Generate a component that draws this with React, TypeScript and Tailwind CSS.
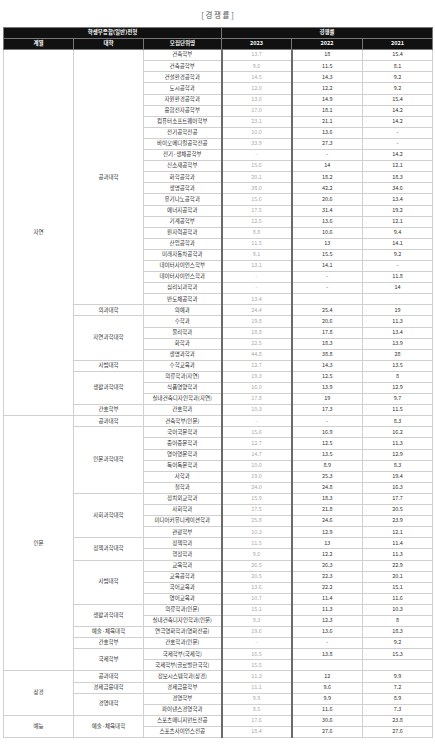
import React from 'react';

type Dept = [string, string, string, string];
type College = { name: string; depts: Dept[] };
type Group = { name: string; colleges: College[] };

const groups: Group[] = [
  {
    name: '자연',
    colleges: [
      {
        name: '공과대학',
        depts: [
          ['건축학부', '13.7', '18', '15.4'],
          ['건축공학부', '9.6', '11.5', '8.1'],
          ['건설환경공학과', '14.5', '14.3', '9.2'],
          ['도시공학과', '12.0', '12.2', '9.2'],
          ['자원환경공학과', '13.0', '14.9', '15.4'],
          ['융합전자공학부', '17.0', '18.1', '14.2'],
          ['컴퓨터소프트웨어학부', '23.1', '21.1', '14.2'],
          ['전기공학전공', '10.0', '13.6', '-'],
          ['바이오메디컬공학전공', '33.9', '27.3', '-'],
          ['전기·생체공학부', '-', '-', '14.2'],
          ['신소재공학부', '15.6', '14', '12.1'],
          ['화학공학과', '20.1', '18.2', '18.3'],
          ['생명공학과', '38.0', '42.2', '34.6'],
          ['유기나노공학과', '15.6', '20.6', '13.4'],
          ['에너지공학과', '17.5', '31.4', '19.2'],
          ['기계공학부', '12.5', '13.6', '12.1'],
          ['원자력공학과', '8.8', '10.6', '9.4'],
          ['산업공학과', '11.5', '13', '14.1'],
          ['미래자동차공학과', '9.1', '15.5', '9.2'],
          ['데이터사이언스학부', '13.1', '14.1', '-'],
          ['데이터사이언스학과', '-', '-', '11.8'],
          ['심리뇌과학과', '-', '-', '14'],
          ['반도체공학과', '13.4', '', ''],
        ],
      },
      { name: '의과대학', depts: [['의예과', '24.4', '25.4', '19']] },
      {
        name: '자연과학대학',
        depts: [
          ['수학과', '19.8', '20.6', '11.3'],
          ['물리학과', '18.8', '17.8', '13.4'],
          ['화학과', '22.5', '18.3', '13.9'],
          ['생명과학과', '44.8', '38.8', '28'],
        ],
      },
      { name: '사범대학', depts: [['수학교육과', '12.7', '14.3', '13.5']] },
      {
        name: '생활과학대학',
        depts: [
          ['의류학과(자연)', '19.3', '12.5', '8'],
          ['식품영양학과', '16.0', '13.9', '12.9'],
          ['실내건축디자인학과(자연)', '17.8', '19', '9.7'],
        ],
      },
      { name: '간호학부', depts: [['간호학과', '10.3', '17.3', '11.5']] },
    ],
  },
  {
    name: '인문',
    colleges: [
      { name: '공과대학', depts: [['건축학부(인문)', '-', '-', '8.3']] },
      {
        name: '인문과학대학',
        depts: [
          ['국어국문학과', '15.6', '16.9', '16.2'],
          ['중어중문학과', '12.7', '12.5', '11.3'],
          ['영어영문학과', '14.7', '13.5', '12.9'],
          ['독어독문학과', '10.0', '8.9', '8.3'],
          ['사학과', '19.0', '25.3', '19.4'],
          ['철학과', '24.0', '24.8', '16.3'],
        ],
      },
      {
        name: '사회과학대학',
        depts: [
          ['정치외교학과', '15.9', '18.3', '17.7'],
          ['사회학과', '17.5', '21.8', '20.5'],
          ['미디어커뮤니케이션학과', '25.8', '24.6', '23.9'],
          ['관광학부', '10.3', '12.9', '12.1'],
        ],
      },
      {
        name: '정책과학대학',
        depts: [
          ['정책학과', '11.5', '13', '11.4'],
          ['행정학과', '9.6', '12.2', '11.3'],
        ],
      },
      {
        name: '사범대학',
        depts: [
          ['교육학과', '26.5', '26.3', '22.9'],
          ['교육공학과', '20.5', '22.3', '20.1'],
          ['국어교육과', '13.6', '22.2', '15.1'],
          ['영어교육과', '10.7', '11.4', '11.6'],
        ],
      },
      {
        name: '생활과학대학',
        depts: [
          ['의류학과(인문)', '15.1', '11.3', '10.3'],
          ['실내건축디자인학과(인문)', '9.3', '12.3', '8'],
        ],
      },
      { name: '예술·체육대학', depts: [['연극영화학과(영화전공)', '19.6', '13.6', '18.3']] },
      { name: '간호학부', depts: [['간호학과(인문)', '-', '-', '9.2']] },
      {
        name: '국제학부',
        depts: [
          ['국제학부(국제학)', '16.5', '13.8', '15.3'],
          ['국제학부(글로벌한국학)', '15.5', '', ''],
        ],
      },
    ],
  },
  {
    name: '상경',
    colleges: [
      { name: '공과대학', depts: [['정보시스템학과(상경)', '11.3', '12', '9.9']] },
      { name: '경제금융대학', depts: [['경제금융학부', '11.1', '9.6', '7.2']] },
      {
        name: '경영대학',
        depts: [
          ['경영학부', '9.9', '9.9', '8.9'],
          ['파이낸스경영학과', '8.5', '11.6', '7.3'],
        ],
      },
    ],
  },
  {
    name: '예능',
    colleges: [
      {
        name: '예술·체육대학',
        depts: [
          ['스포츠매니지먼트전공', '17.6', '30.6', '23.8'],
          ['스포츠사이언스전공', '18.4', '27.6', '27.6'],
        ],
      },
    ],
  },
];

const cell = 'border border-[#d0d0d0] h-[11.1px] p-0 text-center align-middle leading-none text-[5.5px] text-[#333]';
const head = 'border border-[#777] h-[11.1px] p-0 text-center align-middle leading-none text-[5.5px] font-bold text-white bg-[#111]';
const thick = 'border-x-2 border-x-[#6a6a6a]';

export default function App() {
  const rows: React.ReactNode[] = [];
  groups.forEach((g) => {
    const groupRows = g.colleges.reduce((n, c) => n + c.depts.length, 0);
    g.colleges.forEach((c, ci) => {
      c.depts.forEach((d, di) => {
        rows.push(
          <tr key={`${g.name}-${c.name}-${d[0]}`}>
            {ci === 0 && di === 0 && (
              <td rowSpan={groupRows} className={cell}>
                {g.name}
              </td>
            )}
            {di === 0 && (
              <td rowSpan={c.depts.length} className={cell}>
                {c.name}
              </td>
            )}
            <td className={cell}>{d[0]}</td>
            <td className={`${cell} ${thick} !text-[#aaa]`}>{d[1]}</td>
            <td className={cell}>{d[2]}</td>
            <td className={cell}>{d[3]}</td>
          </tr>
        );
      });
    });
  });

  return (
    <div className="w-[435px] min-h-[744px] bg-white font-['Noto_Sans_CJK_KR','Noto_Sans',sans-serif]">
      {/* title */}
      <div className="h-[27px] pt-[10px] text-center text-[7.5px] leading-[10px] text-[#555] whitespace-pre">
        {'[ 경 쟁 률 ]'}
      </div>

      <table className="ml-[3px] w-[429px] table-fixed border-collapse">
        <colgroup>
          <col className="w-[70px]" />
          <col className="w-[70px]" />
          <col className="w-[78px]" />
          <col className="w-[70px]" />
          <col className="w-[71px]" />
          <col className="w-[70px]" />
        </colgroup>
        <thead>
          <tr>
            <th colSpan={3} className={head}>
              학생부종합(일반)전형
            </th>
            <th colSpan={3} className={head}>
              경쟁률
            </th>
          </tr>
          <tr>
            <th className={head}>계열</th>
            <th className={head}>대학</th>
            <th className={head}>모집단위명</th>
            <th className={head}>2023</th>
            <th className={head}>2022</th>
            <th className={head}>2021</th>
          </tr>
        </thead>
        <tbody>{rows}</tbody>
      </table>
    </div>
  );
}
